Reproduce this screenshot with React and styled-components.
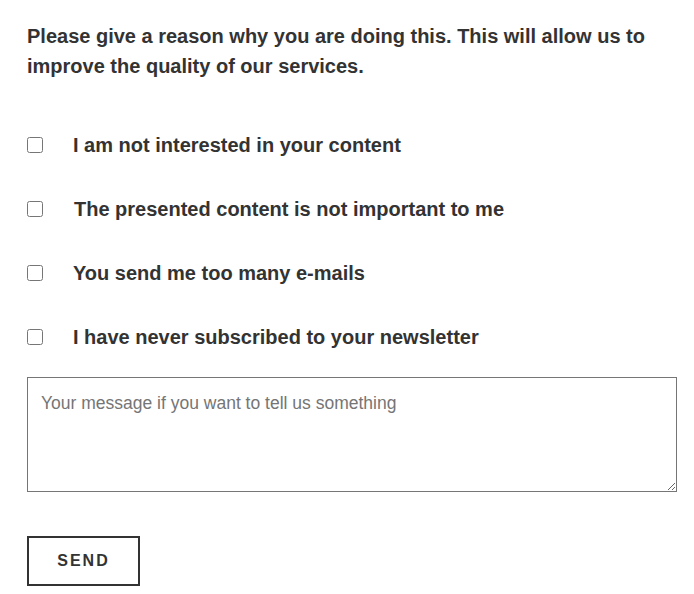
import React from 'react';
import styled, { createGlobalStyle } from 'styled-components';

const GlobalStyle = createGlobalStyle`
  body {
    margin: 0;
    background: #fff;
    font-family: "Liberation Sans", Arial, sans-serif;
    color: #333;
  }
`;

const Form = styled.form`
  width: 650px;
  padding: 21px 0 0 27px;
  display: flex;
  flex-direction: column;
`;

const Intro = styled.p`
  margin: 0 0 52px;
  font-size: 20px;
  font-weight: bold;
  line-height: 30px;
  color: #333;
`;

const Options = styled.div`
  display: flex;
  flex-direction: column;
  gap: 40px;
  margin-bottom: 28px;
`;

const Option = styled.label`
  display: flex;
  align-items: center;
  height: 24px;
  font-size: 20px;
  font-weight: bold;
  color: #333;
  cursor: pointer;
`;

const Check = styled.input.attrs({ type: 'checkbox' })`
  width: 16px;
  height: 16px;
  margin: 0 ${p => (p.$wide ? 31 : 30)}px 0 0;
  accent-color: #333;
`;

const Message = styled.textarea`
  box-sizing: border-box;
  width: 650px;
  height: 115px;
  padding: 15px 13px;
  border: 1px solid #767676;
  font-family: "Liberation Sans", Arial, sans-serif;
  font-size: 17.5px;
  color: #333;
  resize: vertical;
  outline: none;
  &::placeholder {
    color: #757575;
  }
`;

const Send = styled.button`
  box-sizing: border-box;
  margin-top: 44px;
  width: 113px;
  height: 50px;
  border: 2px solid #333;
  background: #fff;
  font-family: "Liberation Sans", Arial, sans-serif;
  font-size: 16px;
  font-weight: bold;
  letter-spacing: 2px;
  color: #333;
  cursor: pointer;
`;

const reasons = [
  'I am not interested in your content',
  'The presented content is not important to me',
  'You send me too many e-mails',
  'I have never subscribed to your newsletter',
];

export default function App() {
  return (
    <>
      <GlobalStyle />
      <Form onSubmit={e => e.preventDefault()}>
        <Intro>
          Please give a reason why you are doing this. This will allow us to improve the quality of our services.
        </Intro>
        <Options>
          {reasons.map((r, i) => (
            <Option key={r}>
              <Check $wide={i === 1} />
              {r}
            </Option>
          ))}
        </Options>
        <Message placeholder="Your message if you want to tell us something" />
        <div>
          <Send type="submit">SEND</Send>
        </div>
      </Form>
    </>
  );
}
